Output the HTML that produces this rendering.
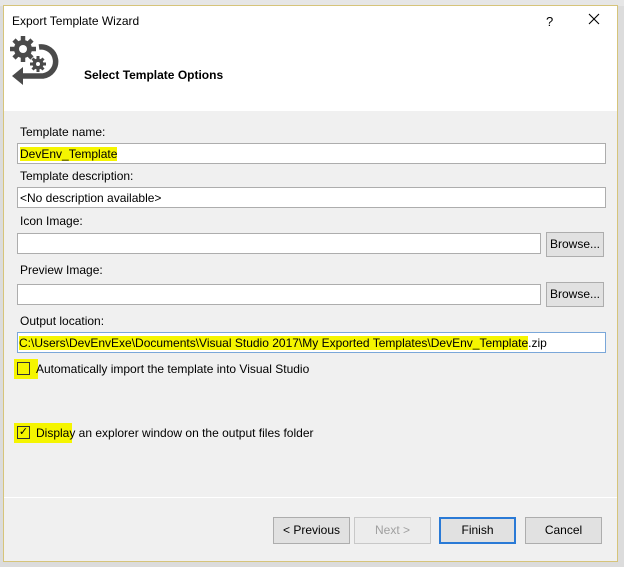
<!DOCTYPE html>
<html><head><meta charset="utf-8"><style>
*{box-sizing:border-box;margin:0;padding:0}
body{width:624px;height:567px;background:#dcdcdc;font-family:"Liberation Sans",sans-serif;font-size:12px;color:#000;position:relative;overflow:hidden}
.win{position:absolute;left:3px;top:5px;width:615px;height:557px;border:1px solid #d6c47a;background:#f0f0f0}
.hdr{position:absolute;left:0;top:0;width:100%;height:105px;background:#fff}
.a{position:absolute}
.lbl{position:absolute;left:16px;font-size:12px}
.in{position:absolute;background:#fff;border:1px solid #adadad;height:21px;padding:3px 2px;font-size:12px;white-space:nowrap}
.hl{background:#f5f500}
.bw{position:absolute;background:#e1e1e1;border:1px solid #adadad;width:58px;height:25px;text-align:center;line-height:23px}
.bt{position:absolute;top:511px;width:77px;height:27px;background:#e1e1e1;border:1px solid #adadad;text-align:center;line-height:25px}
.cb{position:absolute;width:13px;height:13px;border:1px solid #333;background:transparent}
</style></head><body>
<div style="position:absolute;left:0;top:0;width:624px;height:6px;background:#e6e6e6"></div>
<div class="win">
<div class="hdr">
<div class="a" style="left:8px;top:8px;font-size:12px">Export Template Wizard</div>
<div class="a" style="left:542px;top:8px;font-size:13px">?</div>
<svg class="a" style="left:584px;top:7px" width="12" height="12" viewBox="0 0 12 12"><path d="M1 1L11 11M11 1L1 11" stroke="#000" stroke-width="1.1"/></svg>
<svg class="a" style="left:3px;top:27px" width="52" height="52" viewBox="0 0 50 52">
<g fill="#4a4a4a">
<circle cx="15" cy="16" r="9"/>
<g stroke="#4a4a4a" stroke-width="4.5">
<line x1="15" y1="3" x2="15" y2="29"/><line x1="2" y1="16" x2="28" y2="16"/>
<line x1="6" y1="7" x2="24" y2="25"/><line x1="24" y1="7" x2="6" y2="25"/></g>
<circle cx="15" cy="16" r="4" fill="#fff"/>
<circle cx="30" cy="31" r="5.5"/>
<g stroke="#4a4a4a" stroke-width="3"><line x1="30" y1="23" x2="30" y2="39"/><line x1="22" y1="31" x2="38" y2="31"/>
<line x1="24.5" y1="25.5" x2="35.5" y2="36.5"/><line x1="35.5" y1="25.5" x2="24.5" y2="36.5"/></g>
<circle cx="30" cy="31" r="2" fill="#fff"/>
</g>
<path d="M31 14 A14 14 0 0 1 35 43 L14 43" fill="none" stroke="#4a4a4a" stroke-width="5.5"/>
<path d="M4 43 L15 34 L15 52 Z" fill="#4a4a4a"/>
</svg>
<div class="a" style="left:80px;top:62px;font-weight:bold;font-size:12px">Select Template Options</div>
</div>
<div class="lbl" style="top:119px">Template name:</div>
<div class="in" style="left:13px;top:137px;width:589px"><span class="hl">DevEnv_Template</span></div>
<div class="lbl" style="top:163px">Template description:</div>
<div class="in" style="left:13px;top:181px;width:589px">&lt;No description available&gt;</div>
<div class="lbl" style="top:208px">Icon Image:</div>
<div class="in" style="left:13px;top:227px;width:524px"></div>
<div class="bw" style="left:542px;top:226px">Browse...</div>
<div class="lbl" style="top:257px">Preview Image:</div>
<div class="in" style="left:13px;top:278px;width:524px"></div>
<div class="bw" style="left:542px;top:276px">Browse...</div>
<div class="lbl" style="top:308px">Output location:</div>
<div class="in" style="left:13px;top:326px;width:589px;border-color:#7aa7d9;padding-left:1px"><span class="hl">C:\Users\DevEnvExe\Documents\Visual Studio 2017\My Exported Templates\DevEnv_Template</span>.zip</div>
<div class="a hl" style="left:10px;top:353px;width:24px;height:20px"></div>
<div class="cb" style="left:13px;top:356px"></div>
<div class="a" style="left:32px;top:356px">Automatically import the template into Visual Studio</div>
<div class="a hl" style="left:10px;top:417px;width:58px;height:20px"></div>
<div class="cb" style="left:13px;top:420px;font-size:11px;line-height:11px;text-align:center">✓</div>
<div class="a" style="left:32px;top:420px">Display an explorer window on the output files folder</div>
<div class="a" style="left:0;top:491px;width:100%;height:1px;background:#fff"></div>
<div class="bt" style="left:269px">&lt; Previous</div>
<div class="bt" style="left:350px;color:#a0a0a0;background:#ececec;border-color:#c8c8c8">Next &gt;</div>
<div class="bt" style="left:435px;border:2px solid #2a7ad6;line-height:23px">Finish</div>
<div class="bt" style="left:521px">Cancel</div>
</div>
</body></html>
